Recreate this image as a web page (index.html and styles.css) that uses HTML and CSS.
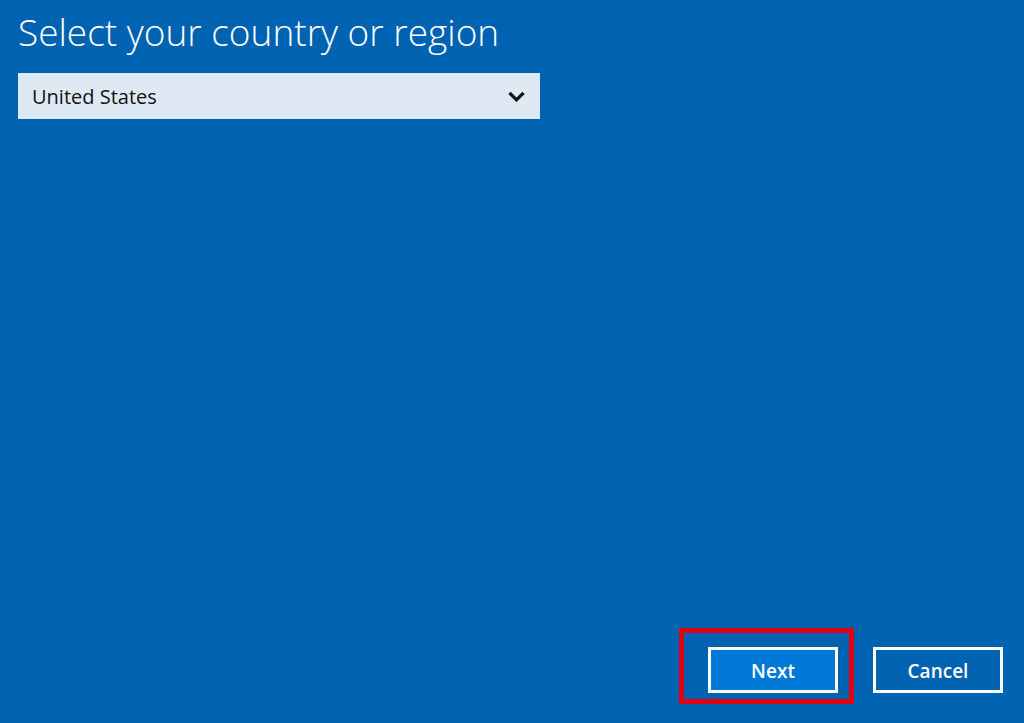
FILE: index.html
```html
<!DOCTYPE html>
<html lang="en">
<head>
<meta charset="utf-8">
<title>Select your country or region</title>
<link rel="stylesheet" href="styles.css">
</head>
<body>
<main class="page">
  <h1 class="title">Select your country or region</h1>
  <div class="select">
    <span class="select-value">United States</span>
    <svg class="chevron" width="17" height="11" viewBox="0 0 17 11" aria-hidden="true">
      <path d="M1.5 1.8 L8.5 8.8 L15.5 1.8" fill="none" stroke="#111" stroke-width="3.3" stroke-linecap="butt" stroke-linejoin="miter"/>
    </svg>
  </div>
  <div class="spacer"></div>
  <div class="actions">
    <span class="highlight-wrap">
      <button class="btn btn-primary">Next</button>
    </span>
    <button class="btn btn-secondary">Cancel</button>
  </div>
</main>
</body>
</html>
```

FILE: styles.css
```css
html, body {
  margin: 0;
  padding: 0;
  height: 100%;
}
body {
  background: #0063b1;
  font-family: "Open Sans", "Noto Sans", "Liberation Sans", sans-serif;
  color: #fff;
  overflow: hidden;
}
.page {
  height: 723px;
  display: flex;
  flex-direction: column;
  box-sizing: border-box;
  padding: 0 21px 30px 18px;
}
.title {
  margin: 11px 0 0 0;
  font-size: 37px;
  font-weight: 300;
  line-height: 42px;
}
.select {
  margin-top: 20px;
  width: 522px;
  height: 46px;
  background: #dfe9f4;
  color: #111;
  display: flex;
  align-items: center;
  justify-content: space-between;
  box-sizing: border-box;
  padding: 1px 15px 0 14px;
}
.select-value {
  font-size: 20px;
}
.chevron {
  display: block;
}
.spacer {
  flex: 1;
}
.actions {
  display: flex;
  justify-content: flex-end;
  gap: 35px;
}
.highlight-wrap {
  position: relative;
  display: block;
}
.highlight-wrap::after {
  content: "";
  position: absolute;
  left: -29px;
  top: -19px;
  width: 175px;
  height: 76px;
  box-sizing: border-box;
  border: 5px solid #e3000f;
  pointer-events: none;
}
.btn {
  width: 130px;
  height: 46px;
  box-sizing: border-box;
  border: 3px solid #fff;
  color: #fff;
  font-family: "Open Sans", "Noto Sans", "Liberation Sans", sans-serif;
  font-size: 19px;
  font-weight: 600;
  display: block;
  padding: 2px 0 0 0;
  cursor: pointer;
}
.btn-primary {
  background: #0078d7;
}
.btn-secondary {
  background: transparent;
}
```
